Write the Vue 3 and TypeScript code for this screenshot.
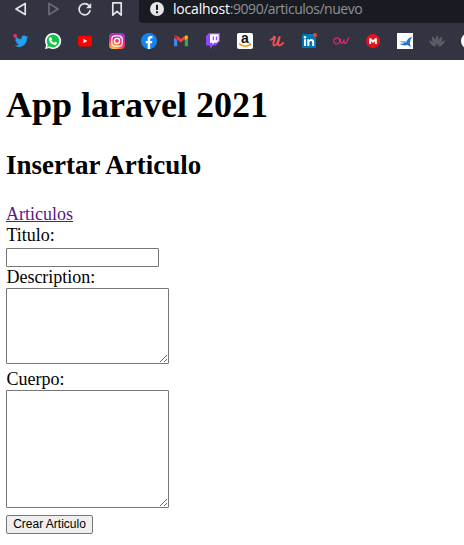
<script setup lang="ts">
import { ref } from 'vue'

const titulo = ref('')
const description = ref('')
const cuerpo = ref('')
</script>

<template>
  <header class="browser">
    <div class="toolbar">
      <svg class="tool" viewBox="0 0 16 16"><path d="M12.2 2.4v11.2L3 8z" /></svg>
      <svg class="tool disabled" viewBox="0 0 16 16"><path d="M4 2.4v11.2L13 8z" /></svg>
      <svg class="tool" viewBox="0 0 16 16"><path d="M13.2 9.2A5.6 5.6 0 1 1 12 4.6" /><path class="solid" d="M14.2 2v5.2H9z" /></svg>
      <svg class="tool" viewBox="0 0 16 16"><path d="M3.8 1.9h8.4v12.2L8 10.4l-4.2 3.7z" /></svg>
      <div class="address">
        <svg class="warn" viewBox="0 0 14 14"><circle cx="7" cy="7" r="7" fill="#e6e6e8" /><path d="M6 2.8h2v5.3H6zM6 9.3h2v2H6z" fill="#191b22" /></svg>
        <span class="url"><b>localhost</b><span>:9090/articulos/nuevo</span></span>
      </div>
    </div>
    <nav class="bookmarks">
      <svg viewBox="0 0 16 16"><path fill="#1da1f2" d="M1.500 12.500c2 .2 3.200-.2 4.400-1-1.400-.1-2.300-.9-2.700-2h1.300C3 9 2.200 8 2.200 6.600l1.300.4C2.300 5.900 1.900 4.600 2.600 3.300c1.600 1.900 3.500 2.800 5.700 3C8 3.900 9.400 2.600 11.100 2.600c.9 0 1.600.4 2.200 1l1.700-.6-1 1.500 1.300-.3-1.400 1.400C13.900 10.700 10.500 13.900 6.100 13.900c-1.800 0-3.300-.5-4.600-1.400z" /><circle cx="2.200" cy="2.800" r="1.900" fill="#f5285f" /></svg>
      <svg viewBox="0 0 16 16"><path fill="#fff" d="M8 0a8 8 0 1 1-3.700 15L0 16l1.100-4A8 8 0 0 1 8 0z" /><path fill="#12c44b" d="M8.100 1.400a6.500 6.500 0 1 1-3.400 12.200L2 14.200l.8-2.700A6.500 6.500 0 0 1 8.100 1.400z" /><path fill="#fff" d="M5.200 4.200h1l.8 2-.7 1c.7 1.300 1.500 2 2.800 2.600l.9-1.100 2 1c.1 1.400-.9 2.200-2 2.200-3.200-.2-6-3.300-6.100-5.500 0-.9.500-1.700 1.300-2.200z" /></svg>
      <svg viewBox="0 0 16 16"><rect x="1" y="2.700" width="14" height="10.800" rx="2" fill="#f00" /><path d="M6.400 5.700v4.600l4-2.300z" fill="#fff" /></svg>
      <svg viewBox="0 0 16 16">
        <defs>
          <radialGradient id="ig" cx=".28" cy="1.05" r="1.1"><stop offset="0" stop-color="#ffdd55" /><stop offset=".35" stop-color="#ff7a3c" /><stop offset=".6" stop-color="#ec2c6f" /><stop offset="1" stop-color="#9b36d0" /></radialGradient>
        </defs>
        <rect width="16" height="16" rx="4" fill="url(#ig)" /><rect x="2.800" y="2.800" width="10.400" height="10.400" rx="3" fill="none" stroke="#fff" stroke-width="1.200" /><circle cx="8" cy="8" r="2.600" fill="none" stroke="#fff" stroke-width="1.300" /><circle cx="11.200" cy="4.900" r=".7" fill="#fff" />
      </svg>
      <svg viewBox="0 0 16 16"><circle cx="8" cy="8" r="8" fill="#1385f3" /><path fill="#fff" d="M6.700 16v-5.700h-2V8h2V6.300c0-2 1.200-3.200 3.100-3.200l1.700.1v2h-1c-1 0-1.300.6-1.300 1.300V8h2.200l-.4 2.300H9.200V16z" /></svg>
      <svg viewBox="0 0 16 16"><path fill="#4285f4" d="M1 4l3.200 2v7.300H1z" /><path fill="#34a853" d="M11.800 6L15 4v9.300h-3.200z" /><path fill="#ea4335" d="M1 4.500C1 2.500 3 2 4.500 3.100L8 5.800l3.500-2.700L13.200 5 8 9.400 3 5.700z" /><path fill="#c5221f" d="M1 4c0-1.400 2-1.800 3.200-.9v3.800L1 4.800z" /><path fill="#fbbc04" d="M11.800 3.100C13 2.200 15 2.600 15 4v.9l-3.200 2.400z" /></svg>
      <svg viewBox="0 0 16 16"><path fill="#9146ff" d="M4 0h11v8.300l-4.300 4.200H8L5 16v-3.500H1V3z" /><path fill="#fff" d="M5 1.300h8.700v6.400l-2 2H9.400l-2 1.800V9.700H5z" /><path fill="#9146ff" d="M7.700 3.500H9v3.700H7.700zM10.800 3.500h1.300v3.700h-1.300z" /></svg>
      <svg viewBox="0 0 16 16"><rect width="16" height="16" rx="2" fill="#fff" /><text x="8" y="9.600" class="amazon">a</text><path d="M2 10.700c4 3.100 8 3.100 11.400.7" fill="none" stroke="#f90" stroke-width="1.500" /><path d="M11.300 10.500l3-.3-.7 2.700z" fill="#f90" /></svg>
      <svg viewBox="0 0 16 16"><path d="M1.600 6.900C3.300 6.600 4.800 5 5 3.700c.9-.2 1.200.4.900 1.300L4.700 9c-.8 2.600-.3 3.900 1 3.600 2-.5 3.500-4.300 4.300-8M10.700 3.900 9.300 9.500c-.5 2.300-.1 3.100 1.300 2.900 1.400-.3 2.600-1.200 3.600-2.500" fill="none" stroke="#eb5252" stroke-width="1.900" stroke-linecap="round" /></svg>
      <svg viewBox="0 0 16 16"><rect x="1" y="1" width="14" height="14" rx="1" fill="#0077b5" /><circle cx="4" cy="4.200" r="1.250" fill="#fff" /><path fill="#fff" d="M3 6.300h2V13H3zM6.300 6.300h1.900v1c1.400-2 5-1.500 5 1.800V13h-2V9.700c0-2.300-2.900-2.200-2.900 0V13h-2z" /><circle cx="14" cy="2" r="2.100" fill="#ed423c" /></svg>
      <svg viewBox="0 0 16 16"><path d="M5.700 5.400C3.400 4.100.8 5.400.8 8c0 3.200 3.700 3.900 5.500 1.500C7.200 8.300 7 6.300 5.700 5.400M7.700 6c-.5 2.500-.2 4.500.9 4.500 1 0 2-2.300 2.500-3.700-.3 2 .1 3.700.9 3.700 1.200 0 2.700-3 3.700-5.700" fill="none" stroke="#e52b7a" stroke-width="1.100" stroke-linecap="round" stroke-linejoin="round" /></svg>
      <svg viewBox="0 0 16 16"><circle cx="8" cy="8" r="7" fill="#e5131d" /><path d="M4.200 11V5.200h1.700L8 7.300l2.100-2.100h1.700V11h-1.900V8.300L8 10.100 6.100 8.300V11z" fill="#fff" /></svg>
      <svg viewBox="0 0 16 16"><path d="M0 0h16v16H0z" fill="#fff" /><path fill="#78bce9" d="M1.500 8.100 8 7.900l4 2.500-2.600.8z" /><path fill="#2476c5" d="M15.200 3.500C12 4.700 10 6.600 9.200 9.300L6 10.600l-3.300.2c2.200 1.600 5 2 7.600 1.300l3.700 2-1.200-3.500c.3-2.700 1-4.900 2.400-7.100z" /></svg>
      <svg viewBox="0 0 16 16"><path fill="#5c5e64" d="M8 1.700c1.800 2.700 2 6.200 0 10.500-2-4.300-1.800-7.800 0-10.500zM3.100 3.400c2.700 1 4.100 4.500 4.200 9C4.200 10.800 2.500 7 3.100 3.400zM12.900 3.400c-2.700 1-4.100 4.500-4.200 9 3.100-1.600 4.800-5.400 4.200-9zM0 7.300c2.900.4 5 2.700 7 6.500C3.700 13.600 1 11 0 7.300zM16 7.300c-2.900.4-5 2.700-7 6.500 3.300-.2 6-2.800 7-6.500z" /></svg>
      <svg viewBox="0 0 16 16"><circle cx="8" cy="8" r="8" fill="#fff" /></svg>
    </nav>
  </header>
  <main class="page">
    <h1>App laravel 2021</h1>
    <h2>Insertar Articulo</h2>
    <a href="#">Articulos</a>
    <form @submit.prevent>
      <label for="titulo">Titulo:</label>
      <input id="titulo" v-model="titulo" type="text">
      <label for="description">Description:</label>
      <textarea id="description" v-model="description" class="short" />
      <label for="cuerpo">Cuerpo:</label>
      <textarea id="cuerpo" v-model="cuerpo" class="tall" />
      <button type="submit">Crear Articulo</button>
    </form>
  </main>
</template>

<style>
body {
  background: #fff;
  overflow: hidden;
}
</style>

<style scoped>
.browser {
  height: 60px;
  background: #323442;
  overflow: hidden;
}
.toolbar {
  display: flex;
  height: 23px;
  padding-left: 13px;
  gap: 16px;
}
.tool {
  width: 16px;
  height: 16px;
  margin-top: 1px;
  flex: none;
  fill: none;
  stroke: #e4e4e7;
  stroke-width: 1.7;
  stroke-linejoin: round;
}
.tool .solid {
  fill: #e4e4e7;
  stroke: none;
}
.disabled {
  stroke: #6c6e78;
}
.address {
  display: flex;
  flex: 1;
  margin-left: -2px;
  padding-left: 11px;
  gap: 9px;
  background: #191b22;
  border-bottom-left-radius: 4px;
}
.warn {
  width: 14px;
  height: 14px;
  margin-top: 2px;
  flex: none;
}
.url {
  font: 14px/18px "Open Sans", sans-serif;
  letter-spacing: -0.48px;
  color: #909196;
  white-space: nowrap;
}
.url b {
  font-weight: 400;
  letter-spacing: -0.2px;
  color: #fff;
}
.bookmarks {
  display: flex;
  gap: 16px;
  padding: 10px 0 0 13px;
}
.bookmarks svg {
  width: 16px;
  height: 16px;
  flex: none;
  overflow: visible;
}
.amazon {
  font: bold 14px "Liberation Sans", sans-serif;
  text-anchor: middle;
  fill: #111;
}
.page {
  padding: 24px 6px 0;
  font: 18px/21px "Liberation Serif", serif;
  color: #000;
}
h1 {
  margin: 0;
  font-size: 36px;
  line-height: 42px;
}
h2 {
  margin: 24px 0 23px;
  font-size: 27px;
  line-height: 31px;
}
a {
  display: block;
  width: max-content;
  color: #551a8b;
}
form {
  display: flex;
  flex-direction: column;
  align-items: flex-start;
}
label {
  padding-left: 0.4px;
}
input,
textarea {
  box-sizing: border-box;
  margin: 0;
  border: 1px solid #767676;
  border-radius: 1px;
  background: #fff;
}
input {
  width: 153px;
  height: 19px;
  margin: 2px 0 0;
}
.short {
  width: 163px;
  height: 76px;
  margin-bottom: 5px;
}
.tall {
  width: 163px;
  height: 118px;
  margin-bottom: 7px;
}
button {
  box-sizing: border-box;
  width: 87px;
  height: 19px;
  padding: 0;
  border: 1px solid #767676;
  border-radius: 2px;
  background: #efefef;
  color: #000;
  font: 12px/17px "Liberation Sans", sans-serif;
  white-space: nowrap;
}
</style>
